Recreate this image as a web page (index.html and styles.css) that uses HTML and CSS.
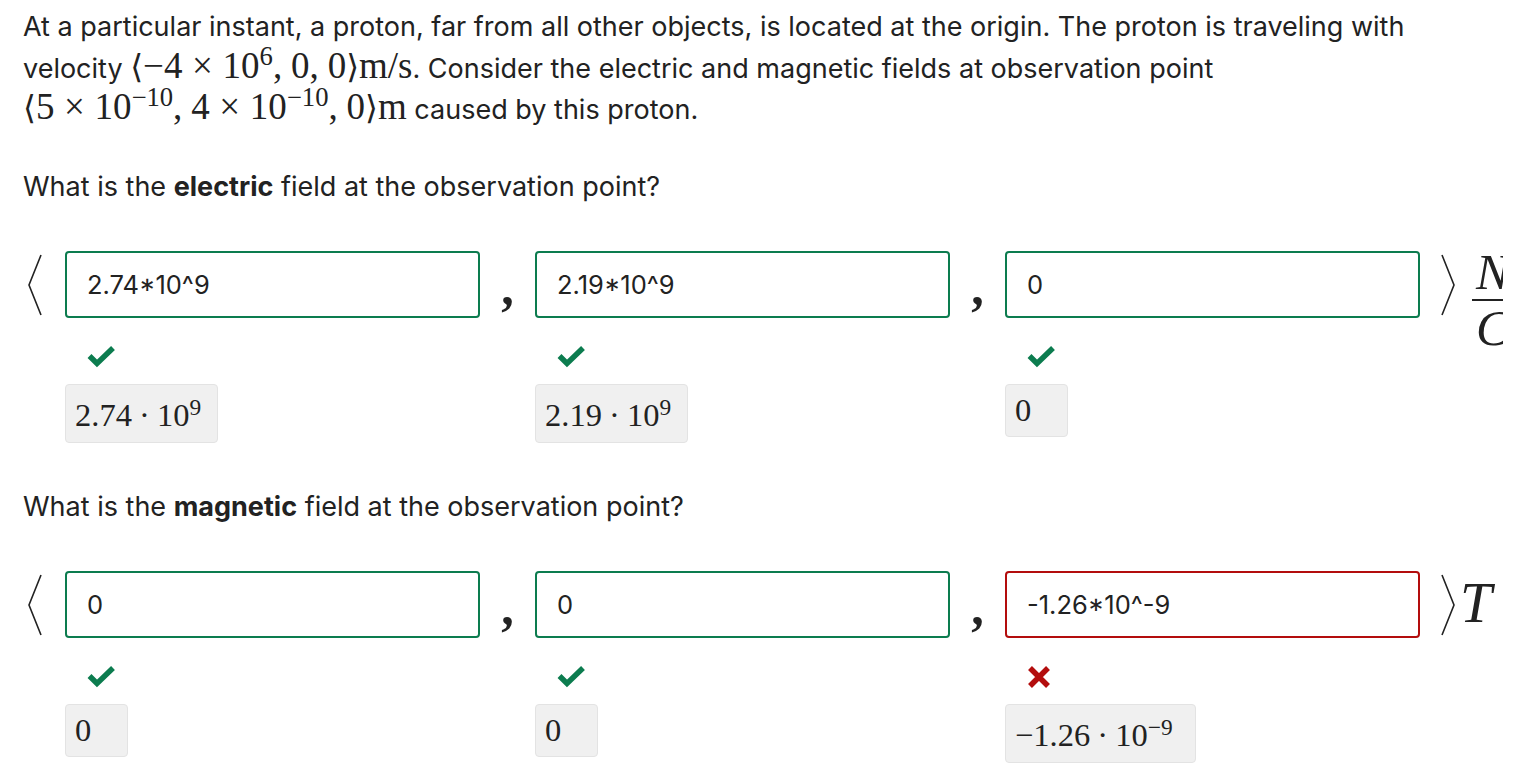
FILE: index.html
```html
<!DOCTYPE html>
<html lang="en">
<head>
<meta charset="utf-8">
<title>Proton fields</title>
<link rel="stylesheet" href="styles.css">
</head>
<body>
<div class="page">
  <p class="intro">At a particular instant, a proton, far from all other objects, is located at the origin. The proton is traveling with velocity <span class="m"><span class="ang">⟨</span>−4<span class="op">×</span>10<sup>6</sup><span class="pc">,</span>0<span class="pc">,</span>0<span class="ang">⟩</span>m/s</span>. Consider the electric and magnetic fields at observation point <span class="m"><span class="ang">⟨</span>5<span class="op">×</span>10<sup>−10</sup><span class="pc">,</span>4<span class="op">×</span>10<sup>−10</sup><span class="pc">,</span>0<span class="ang">⟩</span>m</span> caused by this proton.</p>

  <p class="question first">What is the <b>electric</b> field at the observation point?</p>

  <div class="vec-row">
    <div class="open-cell">
      <svg class="angle" width="16" height="67" viewBox="0 0 16 67"><polyline points="14,4 2,34 14,64" fill="none" stroke="#222" stroke-width="1.6"/></svg>
    </div>
    <div class="field">
      <div class="input ok">2.74*10^9</div>
      <div class="mark"><svg width="30" height="22" viewBox="0 0 30 22"><polyline points="2.5,10 10,17.5 26,2" fill="none" stroke="#0c7c4f" stroke-width="5.5"/></svg></div>
      <div class="preview exp"><span class="pm">2.74<span class="dot">·</span>10<sup>9</sup></span></div>
    </div>
    <div class="comma-cell">,</div>
    <div class="field">
      <div class="input ok">2.19*10^9</div>
      <div class="mark"><svg width="30" height="22" viewBox="0 0 30 22"><polyline points="2.5,10 10,17.5 26,2" fill="none" stroke="#0c7c4f" stroke-width="5.5"/></svg></div>
      <div class="preview exp"><span class="pm">2.19<span class="dot">·</span>10<sup>9</sup></span></div>
    </div>
    <div class="comma-cell">,</div>
    <div class="field">
      <div class="input ok">0</div>
      <div class="mark"><svg width="30" height="22" viewBox="0 0 30 22"><polyline points="2.5,10 10,17.5 26,2" fill="none" stroke="#0c7c4f" stroke-width="5.5"/></svg></div>
      <div class="preview"><span class="pm">0</span></div>
    </div>
    <div class="close-cell">
      <svg class="angle" width="16" height="67" viewBox="0 0 16 67"><polyline points="2,4 14,34 2,64" fill="none" stroke="#222" stroke-width="1.6"/></svg>
      <span class="frac"><span class="num">N</span><span class="den">C</span></span>
    </div>
  </div>

  <p class="question second">What is the <b>magnetic</b> field at the observation point?</p>

  <div class="vec-row">
    <div class="open-cell">
      <svg class="angle" width="16" height="67" viewBox="0 0 16 67"><polyline points="14,4 2,34 14,64" fill="none" stroke="#222" stroke-width="1.6"/></svg>
    </div>
    <div class="field">
      <div class="input ok">0</div>
      <div class="mark"><svg width="30" height="22" viewBox="0 0 30 22"><polyline points="2.5,10 10,17.5 26,2" fill="none" stroke="#0c7c4f" stroke-width="5.5"/></svg></div>
      <div class="preview"><span class="pm">0</span></div>
    </div>
    <div class="comma-cell">,</div>
    <div class="field">
      <div class="input ok">0</div>
      <div class="mark"><svg width="30" height="22" viewBox="0 0 30 22"><polyline points="2.5,10 10,17.5 26,2" fill="none" stroke="#0c7c4f" stroke-width="5.5"/></svg></div>
      <div class="preview"><span class="pm">0</span></div>
    </div>
    <div class="comma-cell">,</div>
    <div class="field">
      <div class="input bad">-1.26*10^-9</div>
      <div class="mark"><svg width="30" height="22" viewBox="0 0 30 22"><path d="M3,2 L21,20 M21,2 L3,20" fill="none" stroke="#b30d0d" stroke-width="5.5"/></svg></div>
      <div class="preview exp wide"><span class="pm">−1.26<span class="dot">·</span>10<sup>−9</sup></span></div>
    </div>
    <div class="close-cell">
      <svg class="angle" width="16" height="67" viewBox="0 0 16 67"><polyline points="2,4 14,34 2,64" fill="none" stroke="#222" stroke-width="1.6"/></svg>
      <span class="unit-t">T</span>
    </div>
  </div>
</div>
</body>
</html>
```

FILE: styles.css
```css
html, body {
  margin: 0;
  padding: 0;
  background: #ffffff;
  overflow: hidden;
}

.page {
  padding: 6px 0 0 23px;
  font-family: "Inter", "Noto Sans", sans-serif;
  font-size: 27px;
  color: #222222;
  width: 1600px;
}

.intro {
  margin: 0;
  max-width: 1420px;
  line-height: 41.5px;
}

.m {
  font-family: "Liberation Serif", "DejaVu Serif", serif;
  font-size: 37px;
  line-height: 0;
  white-space: nowrap;
}

.m .ang {
  font-family: "DejaVu Serif", "DejaVu Sans", serif;
  font-weight: 200;
  font-size: 33px;
}

.m .op {
  margin: 0 0.26em;
}

.m .pc {
  margin-right: 0.24em;
}

.m sup {
  font-size: 0.72em;
}

sup {
  font-size: 0.7em;
  vertical-align: 0.48em;
  line-height: 0;
}

.question {
  margin: 35.5px 0 0;
  line-height: 41.5px;
}

.question.second {
  margin-top: 43px;
}

.question b {
  font-weight: 700;
}

.vec-row {
  display: flex;
  align-items: flex-start;
  margin-top: 43.5px;
  width: 1480px;
  overflow: hidden;
}

.open-cell {
  flex: none;
  width: 42px;
  height: 67px;
  display: flex;
  align-items: center;
}

.open-cell .angle {
  margin-left: 4px;
}

.field {
  flex: none;
  width: 415px;
  display: flex;
  flex-direction: column;
  align-items: flex-start;
}

.input {
  box-sizing: border-box;
  width: 415px;
  height: 67px;
  border: 2px solid #0c7c4f;
  border-radius: 4px;
  padding-left: 20px;
  font-size: 25.5px;
  line-height: 63px;
  color: #222222;
  background: #ffffff;
}

.input.bad {
  border-color: #b30d0d;
}

.mark {
  height: 22px;
  margin-top: 28px;
  padding-left: 22px;
}

.mark svg {
  display: block;
}

.preview {
  box-sizing: border-box;
  margin-top: 16px;
  height: 53px;
  min-width: 63px;
  padding: 0 16px 0 9px;
  background: #f0f0f0;
  border: 1px solid #e3e3e3;
  border-radius: 4px;
  display: flex;
  align-items: center;
}

.preview.exp {
  height: 59px;
  padding-top: 4px;
}

.preview.wide {
  padding-right: 22px;
}

.pm {
  font-family: "Liberation Serif", "DejaVu Serif", serif;
  font-size: 32.5px;
  line-height: 1;
  white-space: nowrap;
}

.pm sup {
  font-size: 0.72em;
}

.pm .dot {
  margin: 0 0.22em;
}

.comma-cell {
  flex: none;
  width: 55px;
  height: 67px;
  display: flex;
  align-items: flex-end;
  justify-content: center;
  font-family: "Liberation Serif", "DejaVu Serif", serif;
  font-weight: 700;
  font-size: 50px;
  line-height: 1;
  color: #222222;
  box-sizing: border-box;
  padding-bottom: 6px;
}

.close-cell {
  flex: none;
  height: 67px;
  display: flex;
  align-items: center;
  padding-left: 20px;
  font-family: "Liberation Serif", "DejaVu Serif", serif;
  white-space: nowrap;
}

.frac {
  display: inline-flex;
  flex-direction: column;
  align-items: center;
  margin-left: 16px;
  margin-top: 30px;
  font-style: italic;
  font-size: 50px;
  line-height: 1;
}

.frac .num {
  padding: 0 4px 2px;
  border-bottom: 2px solid #222;
}

.frac .den {
  padding-top: 2px;
}

.unit-t {
  font-style: italic;
  font-size: 57px;
  line-height: 1;
  margin-left: 4px;
  margin-top: -4px;
}
```
